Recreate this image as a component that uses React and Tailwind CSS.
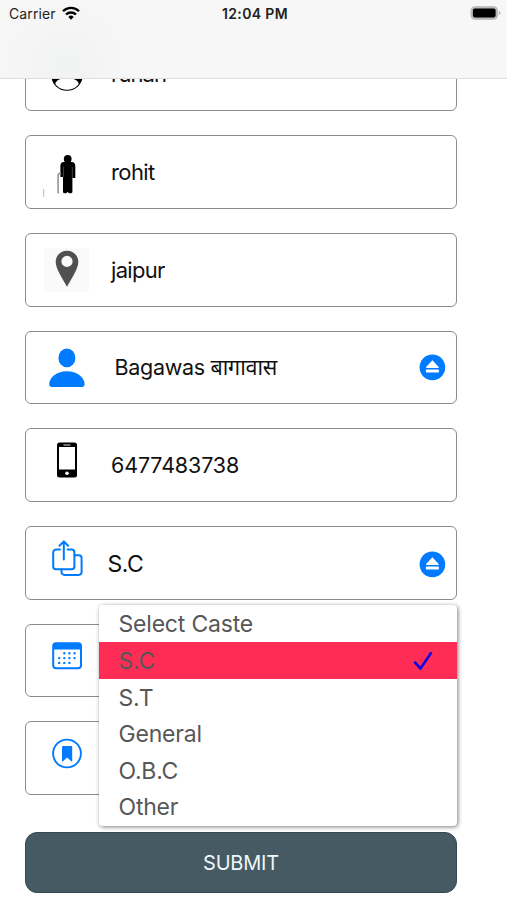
import React, { useState } from 'react';

const iconClass = 'w-[70px] h-[72px] shrink-0';

const FaceIcon = () => (
  <svg className={iconClass} viewBox="0 0 70 72">
    <clipPath id="face">
      <circle cx="41" cy="37" r="14.8" />
    </clipPath>
    <circle cx="41" cy="37" r="15.800" fill="#000" />
    <ellipse cx="41" cy="46.300" rx="11.800" ry="6.600" fill="#fff" clipPath="url(#face)" />
  </svg>
);

const ElderIcon = () => (
  <svg className={iconClass} viewBox="0 0 70 72">
    <circle cx="41.7" cy="22.9" r="3.9" />
    <path d="M37.5 26h8.400c2 0 3.400 1.600 3.400 3.600V42h-2.900v14c0 1.700-4 1.700-4.400 0h-.6c-.4 1.700-4.400 1.700-4.400 0V41h-2.600V29.600c0-2 1.300-3.600 3.100-3.600z" />
    <path d="M37.400 31v10M46.300 31v11" stroke="#888" strokeWidth=".5" />
    <path d="M35 38.500c-1.700-1.800-2.900-.7-2.900 1V57.500" fill="none" stroke="#888" strokeWidth="1.400" />
    <path d="M17.700 53v8" stroke="#bbb" strokeWidth="1" />
  </svg>
);

const PinIcon = () => (
  <svg className={iconClass} viewBox="0 0 70 72">
    <rect x="18" y="14" width="45" height="44" fill="#fafafa" />
    <path
      fill="#505050"
      fillRule="evenodd"
      d="M41 16.800c-6.400 0-11.300 4.800-11.300 11 0 7.200 6 15.200 11.300 25 5.300-9.800 11.300-17.800 11.300-25 0-6.200-4.900-11-11.300-11zm0 5a5.600 5.600 0 1 1 0 11.200 5.600 5.600 0 0 1 0-11.200z"
    />
  </svg>
);

const UserIcon = () => (
  <svg className={iconClass} viewBox="0 0 70 72" fill="#007aff">
    <ellipse cx="40.900" cy="26.900" rx="8.500" ry="9.400" />
    <path d="M26 56c-2 0-2.800-1.100-2.800-3 0-5.500 6.500-12.800 17.700-12.800s17.700 7.300 17.700 12.800c0 1.900-.8 3-2.800 3z" />
  </svg>
);

const PhoneIcon = () => (
  <svg className={iconClass} viewBox="0 0 70 72">
    <rect x="31" y="13.500" width="20" height="35" rx="2.500" />
    <rect x="33" y="18" width="16" height="22.500" fill="#fff" />
    <path d="M37.500 16h7" stroke="#999" strokeWidth="1.500" />
    <circle cx="41" cy="44.300" r="1.800" fill="#fff" />
  </svg>
);

const ShareIcon = () => (
  <svg className={iconClass} viewBox="0 0 70 72" fill="none" stroke="#007aff" strokeWidth="2" strokeLinecap="round" strokeLinejoin="round">
    <path d="M34 22.600h-4a2.800 2.800 0 0 0-2.800 2.800v14a2.800 2.800 0 0 0 2.800 2.800h15.600a2.800 2.800 0 0 0 2.800-2.800v-14a2.800 2.800 0 0 0-2.800-2.800h-4" />
    <path d="M37.800 32.500V14.700M33.500 18.700l4.300-4.300 4.300 4.300" />
    <path d="M48.400 28.300h4.400a2.800 2.800 0 0 1 2.800 2.800v14a2.800 2.800 0 0 1-2.800 2.800H38.300a2.800 2.800 0 0 1-2.800-2.800v-2.900" />
  </svg>
);

const CalendarIcon = () => (
  <svg className={iconClass} viewBox="0 0 70 72">
    <rect x="27.200" y="19.300" width="27.800" height="25" rx="3" fill="none" stroke="#007aff" strokeWidth="2" />
    <path d="M27 25.400v-3a3 3 0 0 1 3-3h22a3 3 0 0 1 3 3v3z" fill="#007aff" />
    <path
      d="M38.300 29.300h.01M43.400 29.300h.01M48.600 29.300h.01M33.200 34.100h.01M38.300 34.100h.01M43.400 34.100h.01M48.600 34.100h.01M33.200 38.900h.01M38.300 38.900h.01M43.400 38.900h.01"
      stroke="#007aff"
      strokeWidth="2.400"
      strokeLinecap="round"
    />
  </svg>
);

const BookmarkIcon = () => (
  <svg className={iconClass} viewBox="0 0 70 72">
    <circle cx="41" cy="31.500" r="13.900" fill="none" stroke="#007aff" strokeWidth="1.900" />
    <path d="M37.300 23.900h7.600c.8 0 1.300.5 1.300 1.300v13.700c0 .6-.6.700-1 .3l-4.100-3.700-4.100 3.700c-.4.400-1 .3-1-.3V25.200c0-.8.500-1.300 1.300-1.300z" fill="#007aff" />
  </svg>
);

const EjectIcon = ({ className }) => (
  <svg className={`w-[26px] h-[26px] ml-auto mr-[11px] overflow-visible ${className || ''}`} viewBox="0 0 26 26">
    <g transform="translate(.4 .4)">
      <circle cx="13" cy="13" r="12.800" fill="#007aff" />
      <path d="M13 5.800l6.300 6.800q.4 1-.6 1H7.300q-1 0-.6-1z" fill="#fff" />
      <rect x="6.500" y="15" width="13" height="3.200" rx=".7" fill="#fff" />
    </g>
  </svg>
);

const fields = [
  { icon: FaceIcon, value: 'ruhan', text: 'ml-[15px] text-[22px] tracking-[-0.9px]' },
  { icon: ElderIcon, value: 'rohit', text: 'ml-[15px] text-[22px] tracking-[-0.6px]' },
  { icon: PinIcon, value: 'jaipur', text: 'ml-[15px] mt-[1px] text-[22px] tracking-[-0.7px]' },
  { icon: UserIcon, value: 'Bagawas बागावास', text: 'ml-[18.500px] text-[21.500px] tracking-[-0.3px]', select: true },
  { icon: PhoneIcon, value: '6477483738', text: 'ml-[15px] text-[21.500px] tracking-[-0.150px]' },
  { icon: ShareIcon, value: 'S.C', text: 'ml-[11.500px] mt-[2px] text-[23px] tracking-[-0.4px]', select: true, eject: 'mt-[3px]' },
  { icon: CalendarIcon, value: '' },
  { icon: BookmarkIcon, value: '' },
];

const castes = ['Select Caste', 'S.C', 'S.T', 'General', 'O.B.C', 'Other'];

const StatusBar = () => (
  <div className="absolute top-0 left-0 z-10 w-full h-[79px] bg-[#f7f7f7] bg-[radial-gradient(circle_at_65px_65px,#f1f2f2,#f7f7f7_75px)] border-b border-[#dedede]">
    <div className="grid grid-cols-3 items-center h-[27px] pl-[9px] pr-[6px] text-[#222]">
      <div className="flex items-center gap-[6px]">
        <span className="text-[14px] tracking-[0.1px]">Carrier</span>
        <svg className="w-[18px] h-[14px] mb-[2px]" viewBox="0 0 18 14" fill="none" stroke="#000" strokeWidth="2.300">
          <path d="M1 5.200a11.400 11.400 0 0 1 16 0" />
          <path d="M4 8.500a7.200 7.200 0 0 1 10 0" />
          <path d="M6.300 10.900a3.900 3.900 0 0 1 5.400 0L9 13.700z" fill="#000" stroke="none" />
        </svg>
      </div>
      <span className="text-center text-[14px] font-semibold tracking-[0.350px] whitespace-nowrap">12:04 PM</span>
      <svg className="w-[31px] h-[14px] mb-[1px] justify-self-end" viewBox="0 0 31 14">
        <rect x="1" y=".7" width="26.500" height="12.600" rx="3.700" fill="#b9b9b9" stroke="#b9b9b9" strokeWidth="1" />
        <rect x="2.900" y="2.600" width="22.700" height="8.800" rx="1.800" />
        <path d="M28.900 4.800c2 .8 2 3.600 0 4.400z" fill="#b0b0b0" />
      </svg>
    </div>
  </div>
);

const CasteMenu = ({ selected, onSelect }) => (
  <div className="absolute left-[72.500px] top-[78.500px] z-10 w-[358.500px] h-[221px] rounded-[4px] bg-white shadow-[1px_1px_4px_rgba(0,0,0,0.5)]">
    {castes.map((caste) => (
      <div
        key={caste}
        onClick={() => onSelect(caste)}
        className={`flex items-center justify-between h-[36.600px] pt-[2px] pl-[20px] pr-[24px] text-[23px] tracking-[-0.2px] text-[#575757] ${
          caste === selected ? 'bg-[#ff2d55]' : ''
        }`}
      >
        <span>{caste}</span>
        {caste === selected && (
          <svg className="w-[20px] h-[20px]" viewBox="0 0 20 20" fill="none" stroke="#1400e6" strokeWidth="2.600" strokeLinecap="round" strokeLinejoin="round">
            <path d="M2 11.500l5.500 6L18 2" />
          </svg>
        )}
      </div>
    ))}
  </div>
);

export default function App() {
  const [caste, setCaste] = useState('S.C');

  return (
    <div className="relative w-full h-[900px] overflow-hidden bg-white font-['Inter','Noto_Sans',sans-serif]">
      <StatusBar />
      <div className="ml-[25px] w-[432px] pt-[37.500px] flex flex-col gap-[24px]">
        {fields.map(({ icon: Icon, value, text, select, eject }, index) => (
          <div key={index} className="relative flex items-center h-[73.700px] border border-[#8c8c8c] rounded-[6px]">
            <Icon />
            <span className={`text-[#111] whitespace-nowrap ${text || ''}`}>{index === 5 ? caste : value}</span>
            {select && <EjectIcon className={eject} />}
            {index === 5 && <CasteMenu selected={caste} onSelect={setCaste} />}
          </div>
        ))}
      </div>
      <button className="block ml-[25px] mt-[36.500px] w-[432px] h-[61px] pt-[2px] rounded-[12px] border border-[#37474f] bg-[#455a62] text-[20px] tracking-[-0.2px] text-[#eef6fa]">
        SUBMIT
      </button>
    </div>
  );
}
